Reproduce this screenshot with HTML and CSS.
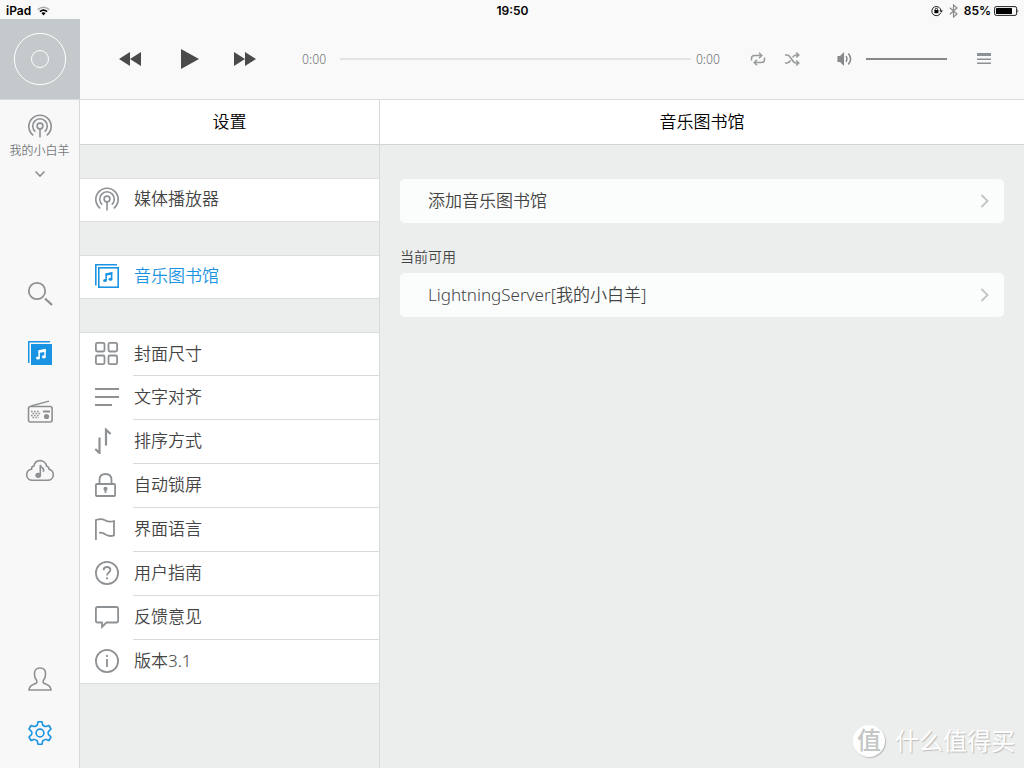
FILE: index.html
```html
<!DOCTYPE html>
<html lang="zh-CN">
<head>
<meta charset="utf-8">
<meta name="viewport" content="width=device-width, initial-scale=1">
<title>设置</title>
<link rel="stylesheet" href="styles.css">
</head>
<body>
<svg class="sprite" aria-hidden="true">
  <symbol id="antenna" viewBox="0 0 26 26">
    <path d="M6.2 22.3A11.2 11.2 0 1 1 19.8 22.3M8.3 18.7A7.3 7.3 0 1 1 17.7 18.7M13 16V24.5"/>
    <circle cx="13" cy="13" r="2.9"/>
  </symbol>
  <symbol id="chevron" viewBox="0 0 10 16"><path d="M1.5 2L7.5 8L1.5 14"/></symbol>
</svg>

<div class="app">
  <header class="status">
    <div class="status-left">
      <span>iPad</span>
      <svg width="13" height="10" viewBox="0 0 13 10" fill="none">
        <path d="M.8 3.6Q6.5-1.2 12.2 3.6" stroke="#aaa" stroke-width="1.5"/>
        <path d="M2.9 5.7Q6.5 2.5 10.1 5.7" stroke="#000" stroke-width="1.6"/>
        <path d="M4.4 7.1Q6.5 5.6 8.6 7.1L6.5 9.4Z" fill="#000"/>
      </svg>
    </div>
    <time>19:50</time>
    <div class="status-right">
      <svg width="12" height="12" viewBox="0 0 12 12" fill="none" stroke="#222">
        <path d="M9.6 8A4.6 4.6 0 1 1 10 6"/><path d="M8.3 5.5H12L10.2 7.8Z" fill="#222" stroke="none"/>
        <rect x="3.4" y="5" width="4" height="3.2" fill="#000" stroke="none"/><path d="M4.2 5.2V4.4Q4.2 3.3 5.4 3.3T6.6 4.4V5.2"/>
      </svg>
      <svg width="9" height="14" viewBox="0 0 9 14" fill="none" stroke="#8a8a8a" stroke-width="1.2"><path d="M.8 3.8L8 10L4.5 13V1L8 4L.8 10.2"/></svg>
      <div class="battery">
        <span>85%</span>
        <svg width="25" height="10" viewBox="0 0 25 10"><rect x=".6" y=".6" width="22" height="8.8" rx="1.6" fill="none" stroke="#222"/><rect x="2" y="2" width="16" height="6" rx=".5"/><path d="M23.6 3Q25 5 23.6 7Z"/></svg>
      </div>
    </div>
  </header>

  <section class="player" aria-label="播放器">
    <div class="cover">
      <svg width="54" height="54" viewBox="0 0 54 54" fill="none" stroke="#fff"><circle cx="27" cy="27" r="25.6"/><circle cx="27" cy="27" r="8.5"/></svg>
    </div>
    <div class="transport">
      <button aria-label="上一首"><svg width="22" height="16" viewBox="0 0 22 16" fill="#4a4a4a"><path d="M11 1V15L0 8ZM22 1V15L11 8Z"/></svg></button>
      <button class="play" aria-label="播放"><svg width="18" height="20" viewBox="0 0 18 20" fill="#4a4a4a"><path d="M0 0L18 10L0 20Z"/></svg></button>
      <button aria-label="下一首"><svg width="22" height="16" viewBox="0 0 22 16" fill="#4a4a4a"><path d="M0 1V15L11 8ZM11 1V15L22 8Z"/></svg></button>
    </div>
    <div class="timeline">
      <span class="time">0:00</span>
      <input class="seek" type="range" min="0" max="100" value="0" aria-label="播放进度">
      <span class="time">0:00</span>
    </div>
    <div class="modes">
      <button aria-label="循环"><svg width="16" height="16" viewBox="0 0 16 16"><path d="M1.5 9.5V7.5Q1.5 4.5 4.5 4.5H11.5M9 1.7L11.8 4.5L9 7.2M14.5 6.5V8.5Q14.5 11.5 11.5 11.5H4.3M7 8.8L4.2 11.5L7 14.3"/></svg></button>
      <button aria-label="随机播放"><svg width="16" height="16" viewBox="0 0 16 16"><path d="M1 4H3C7 4 8 12 12 12H14.5M1 12H3C4.7 12 5.7 10.8 6.5 9.5M8.6 6.4C9.5 5 10.5 4 12 4H14.5M12.2 1.5L14.8 4L12.2 6.5M12.2 9.5L14.8 12L12.2 14.5"/></svg></button>
    </div>
    <div class="volume">
      <svg width="16" height="14" viewBox="0 0 16 14"><path d="M1.2 4.8H3.3L6.3 1.8V12.2L3.3 9.2H1.2Z" fill="#86898c" stroke="#86898c"/><path d="M9 4.2Q10.9 7 9 9.8M11.3 1.6Q15.9 7 11.3 12.4"/></svg>
      <input type="range" min="0" max="100" value="100" aria-label="音量">
    </div>
    <button aria-label="播放列表"><svg width="16" height="12" viewBox="0 0 16 12" fill="#8e9194"><path d="M1 0H15V3H1ZM1 6H15V7H1ZM1 10H15V11H1Z"/><path d="M1 5H15V6H1ZM1 9H15V10H1Z" opacity=".5"/></svg></button>
  </section>

  <div class="body">
    <aside class="sidebar">
      <button class="device">
        <svg class="line thin" width="26" height="26"><use href="#antenna"/></svg>
        <span>我的小白羊</span>
        <svg class="line thin" width="12" height="8" viewBox="0 0 12 8"><path d="M1.5 1.5L6 6L10.5 1.5"/></svg>
      </button>
      <nav class="nav" aria-label="主导航">
        <a href="#search" aria-label="搜索"><svg class="line" width="28" height="28" viewBox="0 0 28 28"><circle cx="11" cy="11" r="8.2"/><path d="M19 18.5L26 25" stroke-width="2.3"/></svg></a>
        <a href="#library" aria-label="音乐图书馆"><svg width="24" height="24" viewBox="0 0 24 24"><path d="M0 0H22V1.5H1.5V22H0Z" fill="#1a93e3"/><path d="M3 3H24V24H3Z" fill="#1a93e3"/><path d="M11.2 16.8V10L17 8.8V15.5" fill="none" stroke="#fff" stroke-width="1.5"/><path d="M10.5 9.3L17.7 8V10.8L10.5 12Z" fill="#fff"/><ellipse cx="10" cy="17" rx="2" ry="1.6" fill="#fff"/><ellipse cx="15.9" cy="15.8" rx="2" ry="1.6" fill="#fff"/></svg></a>
        <a href="#radio" aria-label="电台"><svg width="26" height="24" viewBox="0 0 26 24" fill="none" stroke="#8e9194" stroke-width="1.6"><rect x="1.5" y="6.5" width="23.6" height="15.5" rx="2"/><path d="M4 6L22 1.2" stroke-width="1.3"/><path d="M4 11.5H13M5.5 13.5H14M4 15.5H13M5.5 17.5H12" stroke-dasharray="1.6 1.4"/><path d="M16 11.5H23" stroke-width="2"/><circle cx="19.5" cy="16.5" r="2.6" fill="#8e9194" stroke="none"/></svg></a>
        <a href="#cloud" aria-label="云音乐"><svg class="line thin" width="30" height="26" viewBox="0 0 30 26"><path d="M7.5 22.3C4 22.3 1.7 19.8 1.7 16.7C1.7 13.8 3.5 11.7 6.5 11.2C6.5 9.2 7.5 8.1 8.9 8C9.5 4.5 11.8 2.6 15 2.6S21 4.9 21.6 8.2C23 8.5 24 9.5 24 11.2C26.5 11.8 28.3 13.8 28.3 16.7C28.3 19.8 26 22.3 22.5 22.3Z"/><path d="M15.3 17V7Q15.8 9 17.5 10T18.3 13.8"/><ellipse cx="13.2" cy="17.3" rx="2.1" ry="1.8" fill="#8e9194"/></svg></a>
      </nav>
      <nav class="nav nav-bottom" aria-label="账户">
        <a href="#account" aria-label="账户"><svg class="line thin" width="26" height="26" viewBox="0 0 26 26"><path d="M9.8 16.6V14.7C8.2 13 7.4 10.5 7.4 7.7C7.4 4.2 9.5 2 13 2S18.6 4.2 18.6 7.7C18.6 10.5 17.8 13 16.2 14.7V16.6C17.8 18.4 24 18 24 24H2C2 18 8.2 18.4 9.8 16.6Z"/></svg></a>
        <a href="#settings" class="active" aria-label="设置"><svg width="26" height="26" viewBox="0 0 26 26" fill="none" stroke="#1a93e3" stroke-width="1.6" stroke-linejoin="round"><path d="M11 1.7H15L15.8 5.2Q17.5 6.8 19 6.5L22 5.5L24 9L21.4 11.6Q20.7 13 21.4 14.4L24 17L22 20.5L19 19.5Q17.5 19.2 15.8 20.8L15 24.3H11L10.2 20.8Q8.5 19.2 7 19.5L4 20.5L2 17L4.6 14.4Q5.3 13 4.6 11.6L2 9L4 5.5L7 6.5Q8.5 6.8 10.2 5.2Z"/><circle cx="13" cy="13" r="3.9"/></svg></a>
      </nav>
    </aside>

    <section class="settings">
      <h1>设置</h1>
      <ul>
        <li><a href="#player"><svg class="line thin" width="26" height="26"><use href="#antenna"/></svg>媒体播放器</a></li>
      </ul>
      <ul>
        <li><a href="#music" class="active"><svg width="26" height="26" viewBox="0 0 26 26" fill="none" stroke="#1a93e3"><path d="M1.8 22.5V1.8H23" stroke-width="1.6"/><rect x="4.8" y="4.8" width="19.4" height="19.4" stroke-width="1.6"/><path d="M12.2 17V11L17.6 10V16" stroke-width="1.5"/><path d="M11.5 10.4L18.3 9.3V11.6L11.5 12.7Z" fill="#1a93e3" stroke="none"/><ellipse cx="11" cy="17.4" rx="1.9" ry="1.5" fill="#1a93e3" stroke="none"/><ellipse cx="16.5" cy="16.3" rx="1.9" ry="1.5" fill="#1a93e3" stroke="none"/></svg>音乐图书馆</a></li>
      </ul>
      <ul>
        <li><a href="#size"><svg class="line" width="26" height="26" viewBox="0 0 26 26"><rect x="1.9" y="1.9" width="8.6" height="8.6" rx="1.4"/><rect x="14.5" y="1.9" width="8.6" height="8.6" rx="1.4"/><rect x="1.9" y="14.5" width="8.6" height="8.6" rx="1.4"/><rect x="14.5" y="14.5" width="8.6" height="8.6" rx="1.4"/></svg>封面尺寸</a></li>
        <li><a href="#align"><svg class="line" width="26" height="26" viewBox="0 0 26 26"><path d="M1 5H25M1 13H25M1 21H18" stroke-width="2"/></svg>文字对齐</a></li>
        <li><a href="#sort"><svg class="line" width="26" height="26" viewBox="0 0 26 26"><path d="M1.3 21L5.5 25V9.5M12 17.5V1.7L16.6 6" stroke-width="2.2"/></svg>排序方式</a></li>
        <li><a href="#lock"><svg class="line" width="26" height="26" viewBox="0 0 26 26"><rect x="1.9" y="12" width="19.2" height="12" rx="1"/><path d="M5.5 12V8Q5.5 2 11.5 2T17.5 8V12M11.5 17.5V21"/><circle cx="11.5" cy="16.8" r="1.2" fill="#8e9194"/></svg>自动锁屏</a></li>
        <li><a href="#language"><svg class="line" width="26" height="26" viewBox="0 0 26 26"><path d="M1.9 24V4C5 2.8 8.3 2.8 11 4.2C14 5.9 17 5.9 20 5V19.3C17 20.4 14.5 20.3 12 18.7C9.5 17 8 16.4 5 16.8"/></svg>界面语言</a></li>
        <li><a href="#guide"><svg class="line" width="26" height="26" viewBox="0 0 26 26"><circle cx="13" cy="13" r="11.1"/><path d="M9.6 10.2Q9.6 7 13 7T16.4 10C16.4 12.3 13 12.3 13 15.5M13 17.3V19.3"/></svg>用户指南</a></li>
        <li><a href="#feedback"><svg class="line" width="26" height="26" viewBox="0 0 26 26"><path d="M3.7 3H22.3Q24.1 3 24.1 4.8V16.7Q24.1 18.5 22.3 18.5H12.5L8 22.8V18.5H3.7Q1.9 18.5 1.9 16.7V4.8Q1.9 3 3.7 3Z"/></svg>反馈意见</a></li>
        <li><a href="#about"><svg class="line" width="26" height="26" viewBox="0 0 26 26"><circle cx="13" cy="13" r="11.1"/><path d="M13 7V9M13 11V19"/></svg>版本3.1</a></li>
      </ul>
    </section>

    <main class="content">
      <h2>音乐图书馆</h2>
      <div class="cards">
        <a class="card" href="#add">添加音乐图书馆<svg width="10" height="16"><use href="#chevron"/></svg></a>
        <h3>当前可用</h3>
        <a class="card" href="#server">LightningServer[我的小白羊]<svg width="10" height="16"><use href="#chevron"/></svg></a>
      </div>
    </main>
  </div>
  <div class="watermark"><b>值</b><span>什么值得买</span></div>
</div>
</body>
</html>
```
FILE: styles.css
```css
* { box-sizing: border-box; }
body {
  margin: 0;
  font-family: "Noto Sans", "Noto Sans CJK SC", sans-serif;
  font-weight: 350;
  color: #444;
  background: #eceeed;
}
a { color: inherit; text-decoration: none; }
button { padding: 0; border: 0; background: none; font: inherit; color: inherit; }
svg { display: block; flex: none; }
.sprite { position: absolute; width: 0; height: 0; }
.app { position: relative; min-height: 100vh; display: flex; flex-direction: column; }

.line { fill: none; stroke: #8e9194; stroke-width: 1.8; }
.thin { stroke-width: 1.6; }

.status {
  display: grid;
  grid-template-columns: 1fr auto 1fr;
  align-items: center;
  height: 19px;
  padding: 2px 5px 0 6px;
  background: #f9f9f9;
  color: #000;
  font: 600 12px/16px Inter, sans-serif;
}
.status-left, .status-right { display: flex; align-items: center; gap: 6px; }
.status-right { justify-content: flex-end; }
.battery { display: flex; align-items: center; gap: 3px; }

.player {
  display: flex;
  align-items: center;
  height: 81px;
  padding-right: 32px;
  background: #f9f9f9;
  border-bottom: 1px solid #d8d9d9;
}
.cover { display: grid; place-items: center; width: 80px; height: 80px; background: #c4c9cc; }
.transport { display: flex; align-items: center; margin-left: 39px; }
.play { margin: 0 35px 0 40px; }
.timeline { flex: 1; display: flex; align-items: center; margin: 0 30px 0 46px; }
.time { font: 300 13px/16px "Noto Sans CJK SC", sans-serif; color: #76797b; }
input[type="range"] { appearance: none; min-width: 0; height: 2px; margin: 0; background: #86898c; }
input[type="range"]::-webkit-slider-thumb { appearance: none; width: 0; height: 0; }
input.seek { flex: 1; margin: 0 5px 0 14px; background: #e2e3e3; }
.modes, .volume { display: flex; align-items: center; gap: 18px; fill: none; stroke: #979a9c; stroke-width: 1.5; }
.volume { gap: 13px; margin: 0 29px 0 37px; stroke: #86898c; }
.volume input { width: 81px; }

.body { flex: 1; display: grid; grid-template-columns: 80px 300px 1fr; }
.sidebar {
  display: flex;
  flex-direction: column;
  padding-bottom: 8px;
  background: #f8f8f8;
  border-right: 1px solid #d8d9d9;
}
.device {
  display: flex;
  flex-direction: column;
  align-items: center;
  padding-top: 13px;
  font-size: 12px;
  line-height: 16px;
  color: #76797b;
}
.device span { margin: 4px 0 11px; white-space: nowrap; }
.nav { margin-top: 86px; }
.nav a { display: grid; place-items: center; height: 59px; }
.nav-bottom { margin-top: auto; }
.nav-bottom a { height: 54px; }

h1, h2 {
  margin: 0;
  height: 45px;
  border-bottom: 1px solid #d2d4d4;
  background: #fff;
  color: #000;
  font-size: 17px;
  font-weight: 350;
  line-height: 44px;
  text-align: center;
}
.settings { border-right: 1px solid #d8d9d9; }
.settings ul {
  margin: 33px 0 0;
  padding: 0;
  list-style: none;
  background: #fff;
  border: solid #dcdddd;
  border-width: 1px 0;
}
.settings li { display: flex; height: 44px; padding: 0 0 2px 14px; }
.settings li:first-child { height: 43px; }
.settings li:last-child { height: 43px; }
.settings li:only-child { height: 42px; }
.settings li a {
  flex: 1;
  display: flex;
  align-items: center;
  gap: 14px;
  font-size: 17px;
  line-height: 24px;
}
.settings li:not(:last-child) {
  background: linear-gradient(#d8d9d9, #d8d9d9) 53px 100% / 100% 1px no-repeat;
}
.settings .active { color: #1a93e3; }

.cards { padding: 34px 20px; }
.card {
  display: flex;
  align-items: center;
  justify-content: space-between;
  height: 44px;
  padding: 0 14px 0 28px;
  border-radius: 5px;
  background: #fbfdfc;
  font-size: 17px;
  line-height: 24px;
}
.card svg { fill: none; stroke: #c4c6c8; stroke-width: 2; }
h3 { margin: 24px 0 6px; font-size: 14px; font-weight: 350; line-height: 20px; }

.watermark {
  position: absolute;
  right: 9px;
  bottom: 9px;
  display: flex;
  align-items: center;
  gap: 10px;
  color: #fff;
  font-size: 24px;
  font-weight: 400;
  line-height: 36px;
  text-shadow: 1px 1px 1px #bbb;
  pointer-events: none;
}
.watermark b {
  width: 32px;
  height: 32px;
  border-radius: 50%;
  background: #fff;
  box-shadow: 1px 1px 1px #bbb;
  color: #c4c6c6;
  font-weight: 500;
  line-height: 30px;
  text-align: center;
  text-shadow: none;
}
```
